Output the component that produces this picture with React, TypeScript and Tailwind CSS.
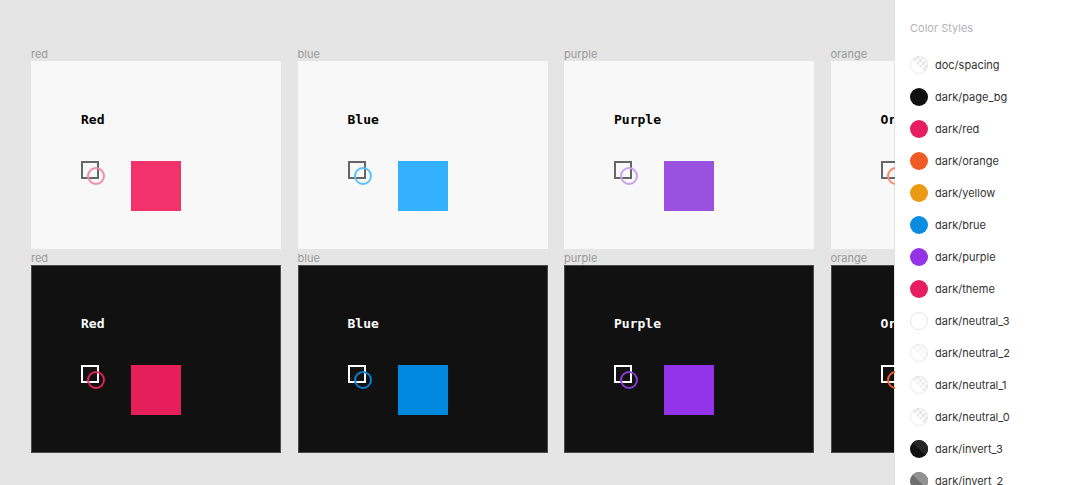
import React from 'react'

type Theme = {
  key: string
  title: string
  light: { fill: string; ring: string }
  dark: { fill: string; ring: string }
}

const THEMES: Theme[] = [
  { key: 'red', title: 'Red', light: { fill: '#f2336b', ring: '#f48aab' }, dark: { fill: '#e61e5a', ring: '#e61e5a' } },
  { key: 'blue', title: 'Blue', light: { fill: '#33b1ff', ring: '#5cc0fa' }, dark: { fill: '#0089df', ring: '#0a7fcc' } },
  { key: 'purple', title: 'Purple', light: { fill: '#9b51e0', ring: '#c9a3f0' }, dark: { fill: '#9333ea', ring: '#8a3ad8' } },
  { key: 'orange', title: 'Orange', light: { fill: '#ff7a45', ring: '#ff8a65' }, dark: { fill: '#f05a24', ring: '#f05a24' } },
]

type SwatchKind =
  | { type: 'solid'; color: string; border?: boolean }
  | { type: 'alpha'; base: string; top: string }
  | { type: 'split'; base: string; top: string }

const STYLES: { name: string; swatch: SwatchKind }[] = [
  { name: 'doc/spacing', swatch: { type: 'alpha', base: '#ffffff', top: 'rgba(255,255,255,0.2)' } },
  { name: 'dark/page_bg', swatch: { type: 'solid', color: '#111111' } },
  { name: 'dark/red', swatch: { type: 'solid', color: '#e61e5f' } },
  { name: 'dark/orange', swatch: { type: 'solid', color: '#f05a24' } },
  { name: 'dark/yellow', swatch: { type: 'solid', color: '#eb9a14' } },
  { name: 'dark/brue', swatch: { type: 'solid', color: '#0a8de0' } },
  { name: 'dark/purple', swatch: { type: 'solid', color: '#9334e6' } },
  { name: 'dark/theme', swatch: { type: 'solid', color: '#e61e5f' } },
  { name: 'dark/neutral_3', swatch: { type: 'solid', color: '#ffffff', border: true } },
  { name: 'dark/neutral_2', swatch: { type: 'alpha', base: '#ffffff', top: 'rgba(255,255,255,0.6)' } },
  { name: 'dark/neutral_1', swatch: { type: 'alpha', base: '#ffffff', top: 'rgba(255,255,255,0.35)' } },
  { name: 'dark/neutral_0', swatch: { type: 'alpha', base: '#ffffff', top: 'rgba(255,255,255,0.15)' } },
  { name: 'dark/invert_3', swatch: { type: 'split', base: '#111111', top: '#262626' } },
  { name: 'dark/invert_2', swatch: { type: 'split', base: '#6e6e6e', top: '#929292' } },
]

function Swatch({ kind, id }: { kind: SwatchKind; id: string }) {
  if (kind.type === 'solid') {
    return (
      <span
        className={`block w-[18px] h-[18px] rounded-full shrink-0 ${kind.border ? 'border border-[#e6e6e6]' : ''}`}
        style={{ backgroundColor: kind.color }}
      />
    )
  }
  return (
    <svg width="18" height="18" viewBox="0 0 18 18" className="shrink-0">
      <defs>
        <clipPath id={`c-${id}`}>
          <circle cx="9" cy="9" r="9" />
        </clipPath>
        <pattern id={`p-${id}`} width="6" height="6" patternUnits="userSpaceOnUse">
          <rect width="6" height="6" fill="#ffffff" />
          <rect width="3" height="3" fill="#dedede" />
          <rect x="3" y="3" width="3" height="3" fill="#dedede" />
        </pattern>
      </defs>
      <g clipPath={`url(#c-${id})`}>
        <rect width="18" height="18" fill={kind.base} />
        {kind.type === 'alpha' ? (
          <>
            <polygon points="0,0 18,0 18,18" fill={`url(#p-${id})`} />
            <polygon points="0,0 18,0 18,18" fill={kind.top} />
          </>
        ) : (
          <polygon points="0,0 18,0 18,18" fill={kind.top} />
        )}
      </g>
      {kind.type === 'alpha' && <circle cx="9" cy="9" r="8.5" fill="none" stroke="#e8e8e8" strokeWidth="1" />}
    </svg>
  )
}

function Frame({ theme, dark }: { theme: Theme; dark: boolean }) {
  const c = dark ? theme.dark : theme.light
  return (
    <div className="flex flex-col shrink-0 w-[250px]">
      <div className="h-[14px] leading-[14px] text-[11px] text-[#9a9a9a] font-['Inter',sans-serif]">{theme.key}</div>
      <div
        className={`h-[188px] pl-[50px] pt-[51px] flex flex-col ${
          dark ? 'bg-[#111111] shadow-[inset_0_0_0_1px_#4a4a4a]' : 'bg-[#f8f8f8]'
        }`}
      >
        <div
          className={`h-[16px] leading-[16px] text-[13px] font-semibold font-['DejaVu_Sans_Mono',monospace] ${
            dark ? 'text-white' : 'text-black'
          }`}
        >
          {theme.title}
        </div>
        <div className="flex mt-[33px]">
          <div className="relative w-[50px] h-[50px]">
            <div className={`w-[18px] h-[18px] border-2 ${dark ? 'border-white' : 'border-[#666666]'}`} />
            <div
              className="absolute left-[6px] top-[6px] w-[18px] h-[18px] rounded-full border-2"
              style={{ borderColor: c.ring }}
            />
          </div>
          <div className="w-[50px] h-[50px]" style={{ backgroundColor: c.fill }} />
        </div>
      </div>
    </div>
  )
}

export default function App() {
  return (
    <div className="flex w-full h-[485px] overflow-hidden font-['Inter',sans-serif]">
      <div className="flex-1 min-w-0 overflow-hidden bg-[#e5e5e5] pl-[31px] pt-[47px] flex flex-col gap-[2px]">
        <div className="flex gap-[16.5px]">
          {THEMES.map((t) => (
            <Frame key={t.key} theme={t} dark={false} />
          ))}
        </div>
        <div className="flex gap-[16.5px]">
          {THEMES.map((t) => (
            <Frame key={t.key} theme={t} dark={true} />
          ))}
        </div>
      </div>

      <aside className="w-[196px] shrink-0 bg-white shadow-[-1px_0_0_#e2e2e2] pl-[15px] pt-[20px]">
        <div className="h-[16px] leading-[16px] text-[11px] text-[#b3b3b3]">Color Styles</div>
        <div className="mt-[13px] flex flex-col">
          {STYLES.map((s, i) => (
            <div key={s.name} className="h-[32px] flex items-center gap-[7px]">
              <Swatch kind={s.swatch} id={`s${i}`} />
              <span className="text-[11px] text-[#333333]">{s.name}</span>
            </div>
          ))}
        </div>
      </aside>
    </div>
  )
}
